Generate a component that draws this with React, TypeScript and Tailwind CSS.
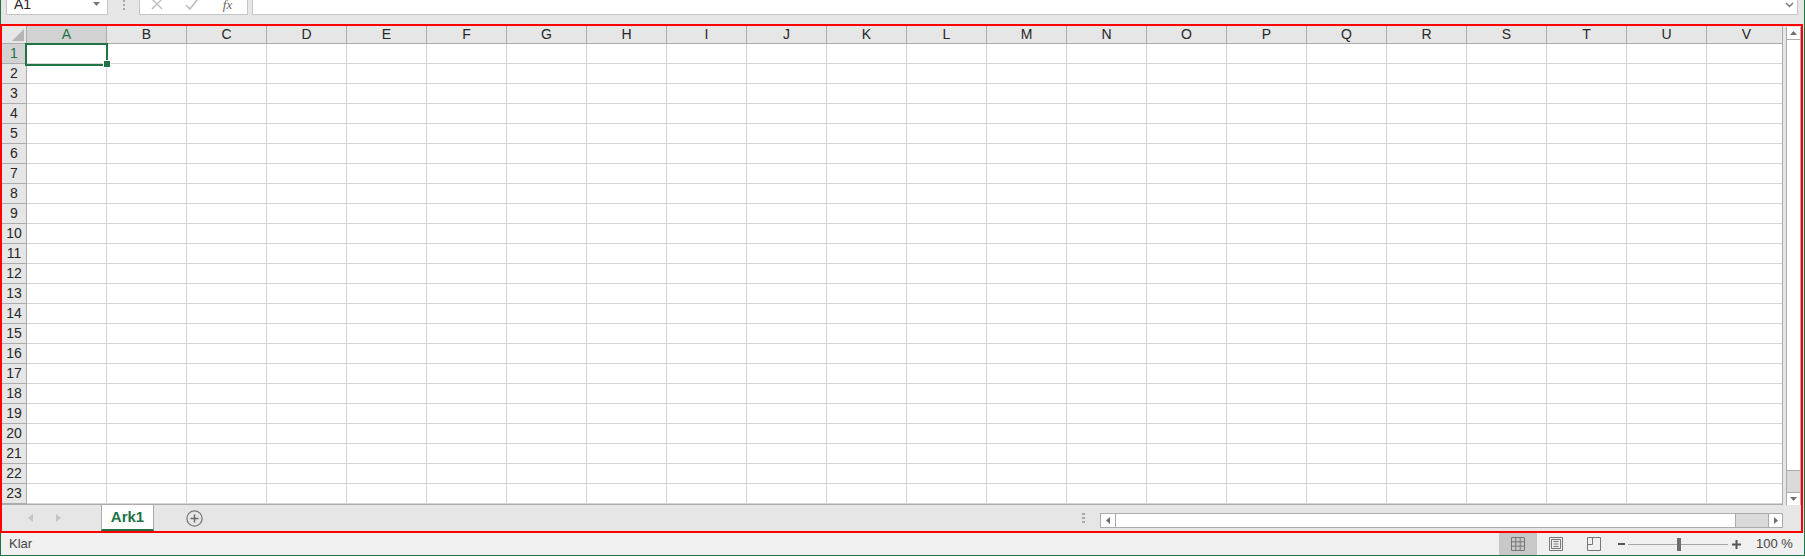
import React from "react";

const COLS = "ABCDEFGHIJKLMNOPQRSTUV".split("");
const ROWS = Array.from({ length: 23 }, (_, i) => i + 1);

const narrow = "font-['Liberation_Sans_Narrow','Liberation_Sans',Arial,sans-serif]";

function FormulaBar() {
  return (
    <div className="h-[26px] shrink-0 flex items-start">
      <div className="flex h-[22px] -mt-[7px] w-full">
        {/* name box */}
        <div className="ml-[5px] w-[102px] h-full bg-white border border-[#c6c6c6] flex items-center justify-between pl-[7px] pr-[7px]">
          <span className={`text-[14px] text-[#262626] ${narrow}`}>A1</span>
          <svg width="7" height="4" viewBox="0 0 7 4">
            <path d="M0 0h7L3.5 4z" fill="#777" />
          </svg>
        </div>
        {/* separator dots */}
        <div className="w-[31px] h-full flex flex-col items-center justify-center gap-[2px] pt-[1px]">
          <span className="w-[2px] h-[2px] bg-[#a8a8a8]" />
          <span className="w-[2px] h-[2px] bg-[#a8a8a8]" />
          <span className="w-[2px] h-[2px] bg-[#a8a8a8]" />
        </div>
        {/* cancel / enter / fx */}
        <div className="w-[109px] h-full bg-white border border-[#c6c6c6] flex items-center">
          <div className="w-[34px] flex justify-center">
            <svg width="12" height="12" viewBox="0 0 12 12">
              <path d="M1 1l10 10M11 1L1 11" stroke="#bdbdbd" strokeWidth="1.4" fill="none" />
            </svg>
          </div>
          <div className="w-[34px] flex justify-center">
            <svg width="13" height="11" viewBox="0 0 13 11">
              <path d="M1 6l4 4 7-9" stroke="#bdbdbd" strokeWidth="1.6" fill="none" />
            </svg>
          </div>
          <div className="w-[39px] flex justify-center">
            <span className="font-['Liberation_Serif',serif] italic text-[13px] text-[#666] leading-none">
              fx
            </span>
          </div>
        </div>
        {/* formula input */}
        <div className="ml-[4px] flex-1 mr-[6px] h-full bg-white border border-[#c6c6c6] flex items-center justify-end pr-[3px]">
          <svg width="9" height="6" viewBox="0 0 9 6" className="mt-[1px]">
            <path d="M1 1l3.5 3.5L8 1" stroke="#777" strokeWidth="1.4" fill="none" />
          </svg>
        </div>
      </div>
    </div>
  );
}

function Grid() {
  return (
    <div className="relative w-[1781px] h-[479px] overflow-hidden bg-white border-r border-b border-[#ababab]">
      {/* column header row */}
      <div className="flex h-[18px]">
        <div className="relative w-[25px] shrink-0 h-full bg-[#e6e6e6] border-r border-b border-[#ababab]">
          <svg width="12" height="12" viewBox="0 0 12 12" className="absolute right-[2px] bottom-[2px]">
            <path d="M12 0v12H0z" fill="#b6b6b6" />
          </svg>
        </div>
        {COLS.map((c, i) => (
          <div
            key={c}
            className={`w-[80px] shrink-0 h-full flex items-center justify-center border-r border-b text-[14px] ${narrow} ${
              i === 0
                ? "bg-[#d2d2d2] text-[#217346] border-r-[#ababab] border-b-[#217346]"
                : "bg-[#e6e6e6] text-[#262626] border-[#ababab]"
            }`}
          >
            {c}
          </div>
        ))}
      </div>
      {ROWS.map((r) => (
        <div key={r} className="flex h-[20px]">
          <div
            className={`w-[25px] shrink-0 h-full flex items-center justify-center border-r border-b text-[14px] ${narrow} ${
              r === 1
                ? "bg-[#d2d2d2] text-[#217346] border-b-[#ababab] border-r-[#217346]"
                : "bg-[#e6e6e6] text-[#262626] border-[#ababab]"
            }`}
          >
            {r}
          </div>
          {COLS.map((c) => (
            <div key={c} className="w-[80px] shrink-0 h-full border-r border-b border-[#d4d4d4]" />
          ))}
        </div>
      ))}
      {/* active cell */}
      <div className="absolute left-[23px] top-[17px] w-[83px] h-[23px] border-2 border-[#217346]" />
      <div className="absolute left-[102px] top-[35px] w-[6px] h-[6px] bg-[#217346] outline outline-1 outline-white" />
    </div>
  );
}

function VScroll() {
  return (
    <div className="ml-[3px] mt-[1px] w-[15px] h-[478px] flex flex-col border-x border-[#ababab] bg-[#dadada]">
      <div className="h-[13px] shrink-0 bg-white border-b border-[#ababab] flex items-center justify-center">
        <svg width="7" height="4" viewBox="0 0 7 4">
          <path d="M0 4h7L3.5 0z" fill="#6e6e6e" />
        </svg>
      </div>
      <div className="h-[431px] shrink-0 bg-white border-b border-[#ababab]" />
      <div className="flex-1" />
      <div className="h-[13px] shrink-0 bg-white border-t border-[#ababab] flex items-center justify-center">
        <svg width="7" height="4" viewBox="0 0 7 4">
          <path d="M0 0h7L3.5 4z" fill="#6e6e6e" />
        </svg>
      </div>
    </div>
  );
}

function TabBar() {
  return (
    <div className="h-[28px] shrink-0 flex items-start">
      <div className="w-[100px] h-[26px] flex items-center">
        <svg width="5" height="8" viewBox="0 0 5 8" className="ml-[27px]">
          <path d="M5 0v8L0 4z" fill="#c4c4c4" />
        </svg>
        <svg width="5" height="8" viewBox="0 0 5 8" className="ml-[23px]">
          <path d="M0 0v8l5-4z" fill="#c4c4c4" />
        </svg>
      </div>
      <div className="w-[53px] h-[26px] bg-white border-x border-b-2 border-x-[#ababab] border-b-[#217346] flex items-center justify-center">
        <span className={`text-[15px] font-bold text-[#217346] ${narrow}`}>Ark1</span>
      </div>
      <div className="ml-[32px] h-[26px] flex items-center">
        <svg width="17" height="17" viewBox="0 0 17 17">
          <circle cx="8.5" cy="8.5" r="7.6" stroke="#7a7a7a" strokeWidth="1.3" fill="none" />
          <path d="M8.5 4.5v8M4.5 8.5h8" stroke="#6a6a6a" strokeWidth="1.5" />
        </svg>
      </div>
      <div className="flex-1" />
      <div className="h-[26px] flex flex-col justify-center gap-[2px] mr-[15px]">
        <span className="w-[3px] h-[2px] bg-[#a8a8a8]" />
        <span className="w-[3px] h-[2px] bg-[#a8a8a8]" />
        <span className="w-[3px] h-[2px] bg-[#a8a8a8]" />
      </div>
      <div className="mt-[8px] mr-[21px] w-[683px] h-[15px] flex border border-[#ababab] bg-[#dadada]">
        <div className="w-[15px] shrink-0 bg-white border-r border-[#ababab] flex items-center justify-center">
          <svg width="4" height="7" viewBox="0 0 4 7">
            <path d="M4 0v7L0 3.5z" fill="#6e6e6e" />
          </svg>
        </div>
        <div className="w-[620px] shrink-0 bg-white border-r border-[#ababab]" />
        <div className="flex-1" />
        <div className="w-[14px] shrink-0 bg-white border-l border-[#ababab] flex items-center justify-center">
          <svg width="4" height="7" viewBox="0 0 4 7">
            <path d="M0 0v7l4-3.5z" fill="#6e6e6e" />
          </svg>
        </div>
      </div>
    </div>
  );
}

function StatusBar() {
  return (
    <div className="h-[22px] shrink-0 flex items-stretch bg-[#f0f0f0]">
      <div className={`pl-[8px] flex items-center text-[13px] text-[#444] ${narrow}`}>Klar</div>
      <div className="flex-1" />
      <div className="w-[38px] bg-[#c8c8c8] flex items-center justify-center">
        <svg width="14" height="14" viewBox="0 0 14 14">
          <path
            d="M0.5 0.5h13v13h-13zM4.8 0.5v13M9.2 0.5v13M0.5 4.8h13M0.5 9.2h13"
            stroke="#777"
            strokeWidth="1"
            fill="none"
          />
        </svg>
      </div>
      <div className="w-[38px] flex items-center justify-center">
        <svg width="14" height="14" viewBox="0 0 14 14">
          <path
            d="M0.5 0.5h13v13h-13zM2.5 2.5h9v9h-9zM4.5 4.5h5M4.5 7h5M4.5 9.5h5"
            stroke="#777"
            strokeWidth="1"
            fill="none"
          />
        </svg>
      </div>
      <div className="w-[38px] flex items-center justify-center">
        <svg width="14" height="14" viewBox="0 0 14 14">
          <path d="M0.5 0.5h13v13h-13zM5.5 0.5v7h-5" stroke="#777" strokeWidth="1" fill="none" />
        </svg>
      </div>
      <div className="ml-[5px] w-[7px] flex items-center">
        <span className="w-[7px] h-[2px] bg-[#555]" />
      </div>
      <div className="ml-[3px] w-[100px] relative flex items-center">
        <span className="w-full h-[1px] bg-[#a6a6a6]" />
        <span className="absolute left-[49px] top-[5px] w-[4px] h-[13px] bg-[#6e6e6e]" />
      </div>
      <div className="ml-[4px] w-[9px] flex items-center">
        <svg width="9" height="9" viewBox="0 0 9 9">
          <path d="M4.5 0v9M0 4.5h9" stroke="#555" strokeWidth="2" />
        </svg>
      </div>
      <div className={`ml-[15px] w-[48px] flex items-center text-[13px] text-[#444] ${narrow}`}>100 %</div>
    </div>
  );
}

export default function App() {
  return (
    <div className="w-[1805px] h-[559px] bg-white overflow-hidden font-['Liberation_Sans',Arial,sans-serif]">
      <div className="relative h-[556px] flex flex-col bg-[#e6e6e6] border-l border-r border-b border-[#217346]">
        <FormulaBar />
        <div className="flex h-[479px] shrink-0 pl-[1px]">
          <Grid />
          <VScroll />
        </div>
        <TabBar />
        <StatusBar />
        {/* red highlight frame */}
        <div className="absolute -left-[1px] top-[24px] w-[1803px] h-[509px] border-2 border-[#ff0000] pointer-events-none" />
      </div>
    </div>
  );
}
